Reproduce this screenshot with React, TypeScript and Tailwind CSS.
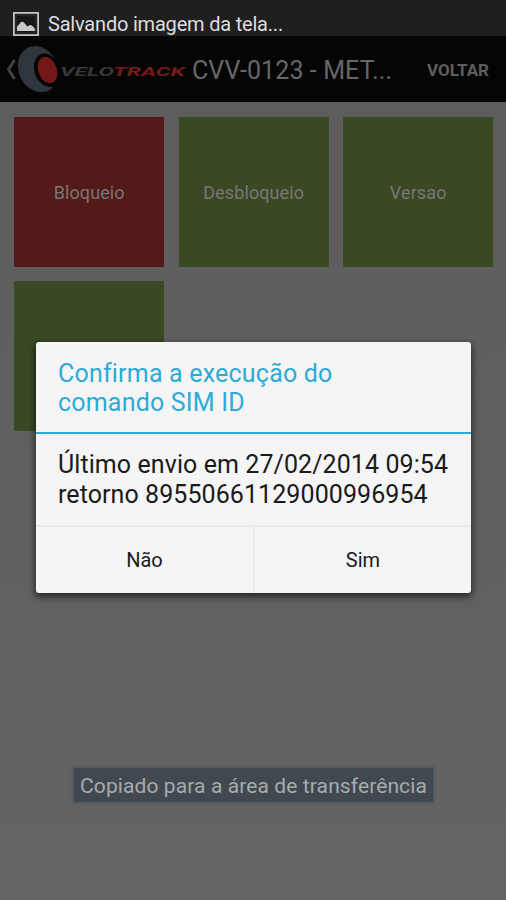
import React from "react";

function PictureIcon() {
  return (
    <svg width="26" height="24" viewBox="0 0 26 24" className="block shrink-0">
      <rect x="0.9" y="0.9" width="24.2" height="22.2" fill="#171717" stroke="#c4c4c4" strokeWidth="1.8" />
      <rect x="3" y="3" width="20" height="18" fill="none" stroke="#303030" strokeWidth="1" />
      <path d="M4 19V14.5L6 12.5L7.5 10.5L9 9.5L11 10.5L13 13L14.5 14.5L16 13.5L18 13L20 14.5L22 17V19Z" fill="#c8c8c8" />
    </svg>
  );
}

function BackAndEmblem() {
  return (
    <svg width="60" height="50" viewBox="0 0 60 50" className="block shrink-0">
      <path d="M14.5 15L8.5 24.500L14.5 34" fill="none" stroke="#3f4143" strokeWidth="3" />
      <path d="M55 14C50 5 42 1 35 1C25 1 18 10 18 20C18 34 27 46 41 47C46 47.300 50 46 53 42C43 43 34 34 34 22C34 14 38 8.500 45 8.500C49 8.500 52 10.500 55 14Z" fill="#30363d" />
      <ellipse cx="47.500" cy="25" rx="9.300" ry="13.700" transform="rotate(-18 47.500 25)" fill="#741719" />
    </svg>
  );
}

function Tile({ label, red = false }: { label: string; red?: boolean }) {
  return (
    <div
      className={`flex h-[150px] w-[150px] items-center justify-center border text-[18px] tracking-[0.1px] text-[#777777] ${
        red ? "border-[#5b1415] bg-[#541a19]" : "border-[#364d1e] bg-[#3a4823]"
      }`}
    >
      {label}
    </div>
  );
}

export default function App() {
  return (
    <div className="relative h-[900px] w-[506px] overflow-hidden bg-linear-to-b from-[#5c5c5c] to-[#646464] font-['Roboto',sans-serif]">
      <div className="flex h-9 items-center bg-[#1f1f1f] pt-[11px] pl-[13px] text-[20px] text-[#dddddd]">
        <PictureIcon />
        <span className="ml-[9px] tracking-[-0.2px] whitespace-nowrap">Salvando imagem da tela...</span>
      </div>
      <header className="flex h-[66px] items-center border-b border-black bg-[#050505] pt-[3px]">
        <BackAndEmblem />
        <div className="w-[126px] shrink-0 pt-[4px]">
          <div className="w-max origin-left scale-x-[1.7] text-[13.500px] leading-none font-bold text-[#34383d] italic">
            VELO<span className="text-[#741a1b]">TRACK</span>
          </div>
        </div>
        <h1 className="ml-[6px] w-[210px] pt-px text-[25px] tracking-[0.1px] whitespace-nowrap text-[#676767]">CVV-0123 - MET...</h1>
        <button className="ml-[25px] pt-px text-[17px] font-bold text-[#5e5e5e]">VOLTAR</button>
      </header>
      <main className="grid grid-cols-[150px_150px_150px] gap-x-[14.500px] gap-y-[14px] pt-[15px] pl-[14.200px]">
        <Tile label="Bloqueio" red />
        <Tile label="Desbloqueio" />
        <Tile label="Versao" />
        <Tile label="" />
      </main>

      <div className="absolute top-[342px] left-[36px] flex h-[251px] w-[435px] flex-col rounded-[3px] bg-[#f5f5f5] shadow-[0_3px_7px_1px_rgba(0,0,0,0.6)]">
        <h2 className="h-[90px] pt-[18px] pl-[22px] text-[25px] leading-[28.500px] tracking-[0.2px] text-[#2cabd8]">
          Confirma a execução do
          <br />
          comando SIM ID
        </h2>
        <div className="h-[2px] bg-[#2cabd8]" />
        <p className="h-[91px] pt-[16px] pl-[22px] text-[25px] leading-[29.500px] tracking-[0.08px] whitespace-nowrap text-[#1a1a1a]">
          Último envio em 27/02/2014 09:54
          <br />
          retorno 89550661129000996954
        </p>
        <div className="flex flex-1 border-t-2 border-[#e8e8e8] text-[20px] text-[#1a1a1a]">
          <button className="w-[219px] border-r-2 border-[#ececec]">Não</button>
          <button className="flex-1">Sim</button>
        </div>
      </div>

      <div className="absolute top-[768px] left-[74px] flex h-[34px] w-[359px] items-center justify-center bg-[#414950] pt-[3px] text-[21px] tracking-[0.1px] whitespace-nowrap text-[#a6abae] shadow-[0_0_3px_1px_#4b555e]">
        Copiado para a área de transferência
      </div>
    </div>
  );
}
